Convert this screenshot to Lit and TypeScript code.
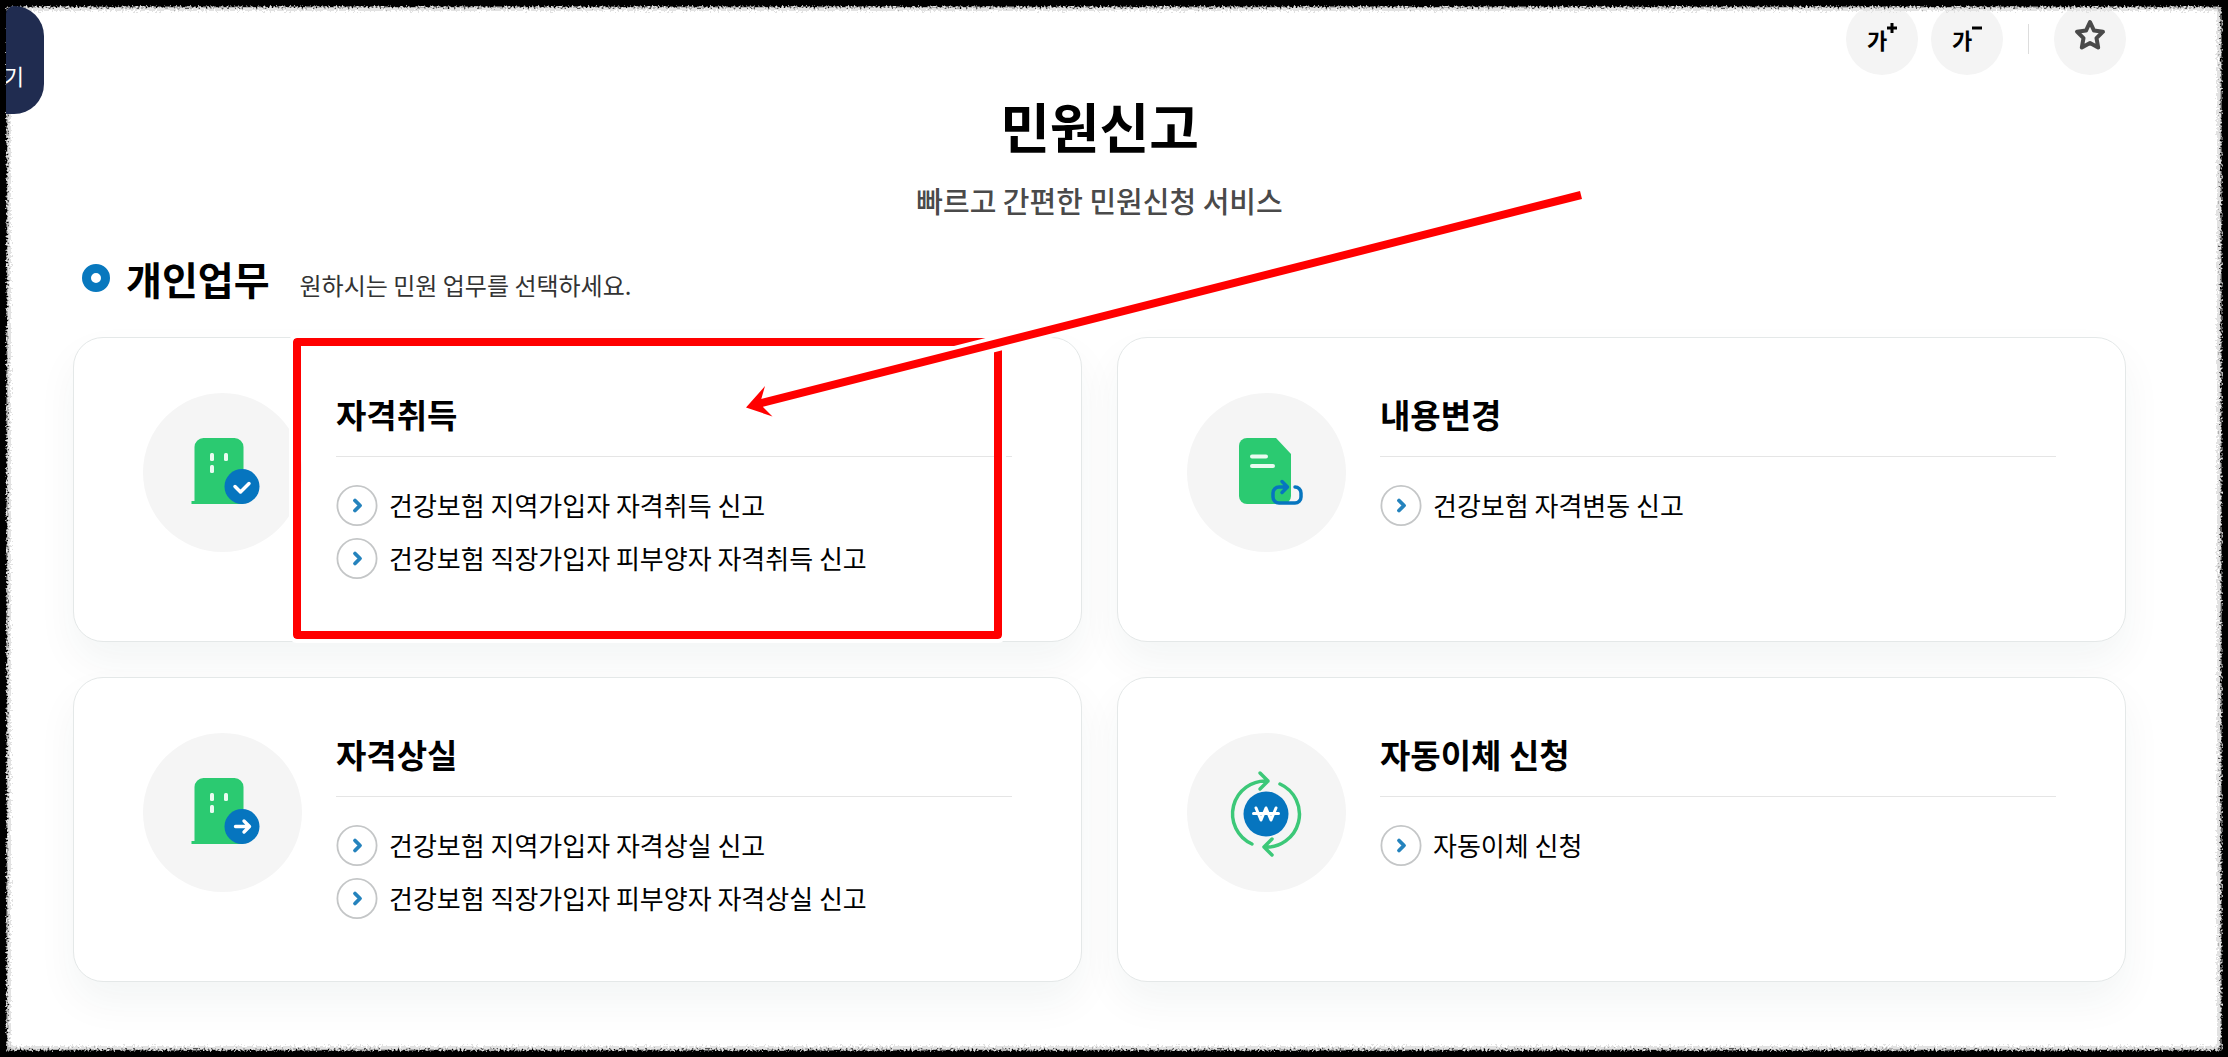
import { LitElement, html, css, svg } from "lit";
import { customElement } from "lit/decorators.js";

type Card = { title: string; icon: string; links: string[]; marked?: boolean };

const CARDS: Card[] = [
  {
    title: "자격취득",
    icon: "gain",
    links: ["건강보험 지역가입자 자격취득 신고", "건강보험 직장가입자 피부양자 자격취득 신고"],
    marked: true,
  },
  { title: "내용변경", icon: "change", links: ["건강보험 자격변동 신고"] },
  {
    title: "자격상실",
    icon: "loss",
    links: ["건강보험 지역가입자 자격상실 신고", "건강보험 직장가입자 피부양자 자격상실 신고"],
  },
  { title: "자동이체 신청", icon: "transfer", links: ["자동이체 신청"] },
];

const building = svg`
  <path d="M51.500 108V54a9 9 0 0 1 9-9h31a9 9 0 0 1 9 9v57H48.500v-3h3z" fill="#2bca71"/>
  <g fill="#e9fbf1"><rect x="67" y="60" width="4" height="8" rx="1.500"/><rect x="81" y="60" width="4" height="8" rx="1.500"/><rect x="67" y="72" width="4" height="8" rx="1.500"/></g>
  <circle cx="99" cy="93.500" r="17.500" fill="#0675bf"/>`;

const ICONS: Record<string, unknown> = {
  gain: svg`<g>${building}
    <path d="M92 93.500l5.500 5.500 8.500-8.500" fill="none" stroke="#fff" stroke-width="3.500" stroke-linecap="round" stroke-linejoin="round"/></g>`,
  loss: svg`<g>${building}
    <path d="M92.500 93.500h13M101 88l5.500 5.500-5.500 5.500" fill="none" stroke="#fff" stroke-width="3.400" stroke-linecap="round" stroke-linejoin="round"/></g>`,
  change: svg`<g>
    <path d="M60 45h29l15 16v42a8 8 0 0 1-8 8H60a8 8 0 0 1-8-8V53a8 8 0 0 1 8-8z" fill="#2bca71"/>
    <path d="M65 63.500h14M65 73h21" stroke="#e9fbf1" stroke-width="4" stroke-linecap="round"/>
    <path d="M99 94h-7a6 6 0 0 0-6 6v4a6 6 0 0 0 6 6h16a6 6 0 0 0 6-6v-4a6 6 0 0 0-6-6M95 88.500l5.500 5.500-5.500 5.500" fill="none" stroke="#0675bf" stroke-width="3.500" stroke-linecap="round" stroke-linejoin="round"/></g>`,
  transfer: svg`<g transform="translate(-1 -1)">
    <g fill="none" stroke="#3cc878" stroke-width="3.500" stroke-linecap="round" stroke-linejoin="round">
      <path d="M66 112A33 33 0 0 1 82 49M74 41l8 8-8 8"/>
      <path d="M94 52A33 33 0 0 1 78 115M86 107l-8 8 8 8"/>
    </g>
    <circle cx="80" cy="82" r="22.500" fill="#0675bf"/>
    <path d="M70 76l5 12 5-12 5 12 5-12M67.500 81.500h25" fill="none" stroke="#fff" stroke-width="3" stroke-linecap="round" stroke-linejoin="round"/></g>`,
};

@customElement("service-card")
export class ServiceCard extends LitElement {
  static properties = { card: { attribute: false } };
  declare card: Card;

  static styles = css`
    :host { display: block; }
    .card {
      position: relative;
      box-sizing: border-box;
      height: 100%;
      min-height: 305px;
      display: flex;
      gap: 34px;
      padding: 55px 69px 40px;
      border: 1px solid #e4e8e8;
      border-radius: 30px;
      background: #fff;
      box-shadow: 0 20px 40px rgba(20, 60, 50, 0.05);
    }
    .badge { flex: none; width: 159px; height: 159px; border-radius: 50%; background: #f5f5f5; }
    .badge svg { display: block; width: 160px; height: 160px; }
    .body { flex: 1; min-width: 0; }
    h3 {
      margin: 0;
      padding-bottom: 21px;
      border-bottom: 1px solid #e5e5e5;
      font-size: 33px;
      line-height: 42px;
      font-weight: 700;
      color: #000;
    }
    ul { list-style: none; margin: 0; padding: 28px 0 0; display: flex; flex-direction: column; gap: 12px; }
    a { display: flex; align-items: center; gap: 11px; color: #000; text-decoration: none; font-size: 26px; line-height: 40px; }
    a svg { flex: none; width: 42px; height: 41px; }
    a span { padding-bottom: 1px; }
    .mark {
      position: absolute;
      left: 219px;
      right: 79px;
      top: 0;
      bottom: 2px;
      border: 8px solid #f00;
      border-radius: 4px;
      outline: 4px solid #fff;
      pointer-events: none;
    }
  `;

  render() {
    const c = this.card;
    return html`
      <article class="card">
        <div class="badge"><svg viewBox="0 0 160 160" aria-hidden="true">${ICONS[c.icon]}</svg></div>
        <div class="body">
          <h3>${c.title}</h3>
          <ul>
            ${c.links.map(
              (t) => html`<li><a href="#">
                <svg viewBox="0 0 42 41" aria-hidden="true">
                  <circle cx="21" cy="20.500" r="19.600" fill="#fff" stroke="#c4c6c7" stroke-width="1.800" />
                  <path d="M19 15.500l5 5-5 5" fill="none" stroke="#2583bd" stroke-width="3.800" stroke-linecap="round" stroke-linejoin="round" />
                </svg><span>${t}</span></a></li>`
            )}
          </ul>
        </div>
        ${c.marked ? html`<div class="mark"></div>` : ""}
      </article>
    `;
  }
}

@customElement("app-root")
export class AppRoot extends LitElement {
  static styles = css`
    :host {
      display: block;
      position: relative;
      box-sizing: border-box;
      min-height: 100vh;
      overflow: hidden;
      background: #fff;
      font-family: "Noto Sans CJK KR", "Noto Sans", sans-serif;
      color: #000;
    }
    .page { padding: 3px 102px 74px 73px; }
    .tools { display: flex; justify-content: flex-end; align-items: center; gap: 13px; }
    .tool {
      width: 72px;
      height: 72px;
      padding: 0;
      border: 0;
      border-radius: 50%;
      background: #f4f4f4;
      display: flex;
      align-items: center;
      justify-content: center;
      font: 700 22px/32px "Noto Sans CJK KR", sans-serif;
      color: #000;
    }
    .tool svg { display: block; }
    .sign { width: 10px; height: 10px; margin-bottom: 22px; }
    .star { width: 34px; height: 34px; margin-bottom: 8px; }
    .rule { width: 1px; height: 30px; margin: 0 12px; background: #ddd; }
    .side {
      position: absolute;
      z-index: 1;
      left: 6px;
      top: 6px;
      width: 38px;
      height: 108px;
      box-sizing: border-box;
      padding: 53px 20px 0 0;
      border: 0;
      border-radius: 8px 30px 30px 0;
      background: #202c50;
      color: #fff;
      display: flex;
      justify-content: flex-end;
      align-items: flex-start;
      overflow: hidden;
      font: 400 22px/32px "Noto Sans CJK KR", sans-serif;
    }
    header { text-align: center; }
    h1 { margin: 13px 0 0; font-size: 54px; line-height: 76px; font-weight: 700; }
    .lead { margin: 14px 0 0; font-size: 29px; line-height: 44px; font-weight: 500; color: #4a4a4a; }
    .section { display: flex; align-items: center; padding: 26px 0 0 9px; margin-bottom: 29px; }
    .dot { width: 10px; height: 10px; border: 9px solid #0878be; border-radius: 50%; margin-right: 16px; }
    h2 { margin: 0 30px 0 0; font-size: 39px; line-height: 60px; font-weight: 700; }
    .hint { margin: 14px 0 0; font-size: 24px; line-height: 36px; color: #333; }
    .grid { display: grid; grid-template-columns: 1fr 1fr; gap: 35px; }
    .arrow, .frame { position: absolute; left: 0; top: 0; pointer-events: none; }
    .arrow { width: 1600px; height: 440px; }
    .frame { width: 100%; height: 100%; }
  `;

  render() {
    return html`
      <main class="page">
        <nav class="tools" aria-label="화면 도구">
          <button class="tool" aria-label="글자 크게">가<svg class="sign" viewBox="0 0 10 10"><path d="M5 0v10M0 5h10" stroke="#000" stroke-width="3" /></svg></button>
          <button class="tool" aria-label="글자 작게">가<svg class="sign" viewBox="0 0 10 10"><path d="M0 5h10" stroke="#000" stroke-width="3" /></svg></button>
          <span class="rule"></span>
          <button class="tool" aria-label="즐겨찾기">
            <svg class="star" viewBox="0 0 34 34"><path d="M17 4l4 8.600 9 1.100-6.500 6.500 1.700 9.300L17 25l-8.200 4.500 1.700-9.300L4 13.700l9-1.100z" fill="none" stroke="#4a4a4a" stroke-width="4" stroke-linejoin="round" /></svg>
          </button>
        </nav>
        <header>
          <h1>민원신고</h1>
          <p class="lead">빠르고 간편한 민원신청 서비스</p>
        </header>
        <div class="section">
          <span class="dot"></span>
          <h2>개인업무</h2>
          <p class="hint">원하시는 민원 업무를 선택하세요.</p>
        </div>
        <section class="grid">
          ${CARDS.map((c) => html`<service-card .card=${c}></service-card>`)}
        </section>
      </main>
      <button class="side">기</button>
      <svg class="arrow" viewBox="0 0 1600 440" aria-hidden="true">
        <path d="M1581 195L760 403.500" stroke="#fff" stroke-width="16" />
        <path d="M1581 195L760 403.500" stroke="#f00" stroke-width="8" />
        <path d="M746 407.500L765 386l-4 14 2 7 9.500 9.500z" fill="#f00" />
      </svg>
      <svg class="frame" aria-hidden="true">
        <defs>
          <filter id="rough" filterUnits="userSpaceOnUse" x="0" y="0" width="100%" height="100%" color-interpolation-filters="sRGB">
            <feTurbulence type="fractalNoise" baseFrequency="0.5" numOctaves="2" seed="4" result="n" />
            <feDisplacementMap in="SourceGraphic" in2="n" scale="8" xChannelSelector="R" yChannelSelector="G" />
          </filter>
        </defs>
        <g filter="url(#rough)" fill="none">
          <rect width="100%" height="100%" rx="14" stroke="#e2e2e2" stroke-width="22" />
          <rect width="100%" height="100%" rx="14" stroke="#b0b0b0" stroke-width="16" />
          <rect width="100%" height="100%" stroke="#000" stroke-width="13" />
        </g>
        <rect width="100%" height="100%" fill="none" stroke="#000" stroke-width="10" />
      </svg>
    `;
  }
}
